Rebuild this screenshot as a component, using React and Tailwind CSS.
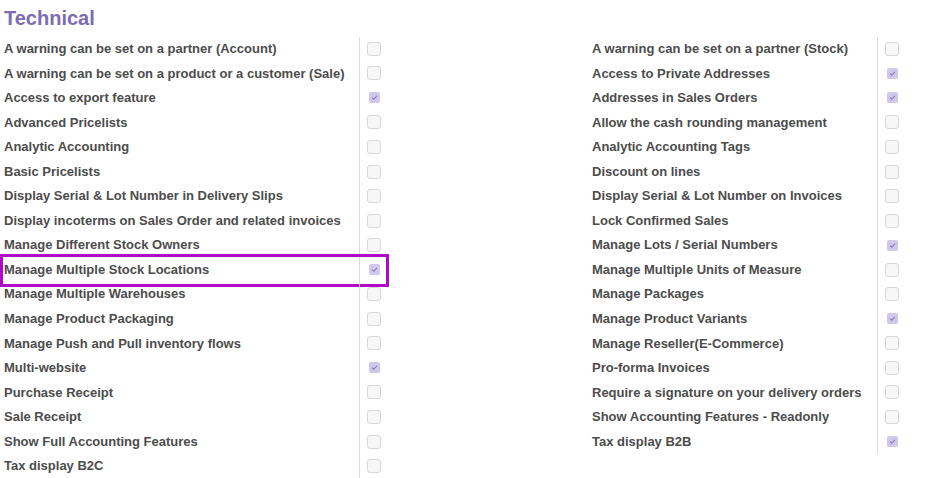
const left = [
  ['A warning can be set on a partner (Account)', false],
  ['A warning can be set on a product or a customer (Sale)', false],
  ['Access to export feature', true],
  ['Advanced Pricelists', false],
  ['Analytic Accounting', false],
  ['Basic Pricelists', false],
  ['Display Serial & Lot Number in Delivery Slips', false],
  ['Display incoterms on Sales Order and related invoices', false],
  ['Manage Different Stock Owners', false],
  ['Manage Multiple Stock Locations', true, true],
  ['Manage Multiple Warehouses', false],
  ['Manage Product Packaging', false],
  ['Manage Push and Pull inventory flows', false],
  ['Multi-website', true],
  ['Purchase Receipt', false],
  ['Sale Receipt', false],
  ['Show Full Accounting Features', false],
  ['Tax display B2C', false],
]

const right = [
  ['A warning can be set on a partner (Stock)', false],
  ['Access to Private Addresses', true],
  ['Addresses in Sales Orders', true],
  ['Allow the cash rounding management', false],
  ['Analytic Accounting Tags', false],
  ['Discount on lines', false],
  ['Display Serial & Lot Number on Invoices', false],
  ['Lock Confirmed Sales', false],
  ['Manage Lots / Serial Numbers', true],
  ['Manage Multiple Units of Measure', false],
  ['Manage Packages', false],
  ['Manage Product Variants', true],
  ['Manage Reseller(E-Commerce)', false],
  ['Pro-forma Invoices', false],
  ['Require a signature on your delivery orders', false],
  ['Show Accounting Features - Readonly', false],
  ['Tax display B2B', true],
]

// checked boxes are the faded/readonly kind
function Check({ on }) {
  if (on) {
    return (
      <span className="flex h-[11px] w-[11px] items-center justify-center rounded-[2px] bg-[#d0c8ea]">
        <svg viewBox="0 0 10 10" className="h-[7px] w-[7px]">
          <path d="M1.5 5.2 L4 7.5 L8.5 2.5" fill="none" stroke="#8272c0" strokeWidth="1.6" />
        </svg>
      </span>
    )
  }
  return <span className="block h-[14px] w-[14px] rounded-[3px] border border-[#d8d8d8] bg-[#f7f7f7]" />
}

function Row({ label, on, mark, labelW }) {
  return (
    <div className="relative flex h-[24.55px] items-center">
      <div className={`${labelW} shrink-0 truncate pl-[4px]`}>{label}</div>
      <div className="flex h-full w-[29px] items-center justify-center border-l border-[#dcdcdc]">
        <Check on={on} />
      </div>
      {mark && (
        <div className="absolute left-0 top-[-3px] h-[33px] w-[389px] border-[3px] border-[#b00ac8]" />
      )}
    </div>
  )
}

export default function App() {
  return (
    <div
      className="h-[478px] w-[932px] overflow-hidden bg-white text-[13px] font-bold text-[#4c4c4c]"
      style={{ fontFamily: '"Liberation Sans", Arial, sans-serif' }}
    >
      <h2 className="h-[36.5px] pl-[4px] pt-[6px] text-[20px] font-bold leading-[24px] text-[#7c6cb3]">Technical</h2>
      <div className="flex">
        <div className="w-[588px] shrink-0">
          {left.map(([l, on, mark]) => (
            <Row key={l} label={l} on={on} mark={mark} labelW="w-[359px]" />
          ))}
        </div>
        <div>
          {right.map(([l, on]) => (
            <Row key={l} label={l} on={on} labelW="w-[289px]" />
          ))}
        </div>
      </div>
    </div>
  )
}
